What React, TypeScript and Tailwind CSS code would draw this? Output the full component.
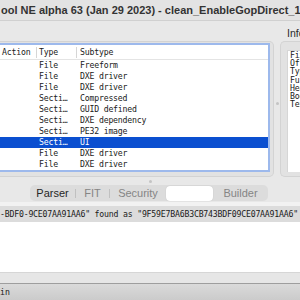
import React from "react";

const rows: [string, string][] = [
  ["File", "Freeform"],
  ["File", "DXE driver"],
  ["File", "DXE driver"],
  ["Secti…", "Compressed"],
  ["Secti…", "GUID defined"],
  ["Secti…", "DXE dependency"],
  ["Secti…", "PE32 image"],
  ["Secti…", "UI"],
  ["File", "DXE driver"],
  ["File", "DXE driver"],
];

const info = [
  "Fixed: No",
  "Offset: 8A4h",
  "Type: 15h",
  "Full size: 1Ah (26)",
  "Header size: 4h (4)",
  "Body size: 16h (22)",
  "Text: AmiBoardInfo",
];

export default function App() {
  return (
    <div className="w-[300px] h-[300px] overflow-hidden bg-[#e8e8e8] flex flex-col font-['Liberation_Sans',Arial,sans-serif] text-[#222]">
      {/* Title bar */}
      <div className="h-[21px] shrink-0 bg-[#e3e3e3] border-b border-[#d0d0d0] flex items-center pl-[1px] overflow-hidden">
        <span className="whitespace-nowrap text-[11px] font-bold text-[#333] leading-none">
          ool NE alpha 63 (Jan 29 2023) - clean_EnableGopDirect_1_
        </span>
      </div>

      {/* Upper panes */}
      <div className="h-[156px] shrink-0 flex">
        {/* Structure */}
        <div className="w-[274px] shrink-0 flex flex-col">
          <div className="h-[20px] shrink-0" />
          <div className="flex-1 bg-[#e2e2e2] border border-l-0 border-[#d3d3d3] rounded-r-[5px] pt-[1px] pr-[3px] pb-[4px]">
            <div className="h-full bg-white border-2 border-l-0 border-[#9db9ec] font-['DejaVu_Sans_Mono',monospace] text-[8.2px] tracking-[-0.2px] text-[#1a1a1a]">
              <div className="h-[15px] flex items-center border-b border-[#e4e4e4]">
                <div className="w-[36px] pl-[2px]">Action</div>
                <div className="w-px h-[11px] bg-[#d6d6d6]" />
                <div className="w-[39px] pl-[2px]">Type</div>
                <div className="w-px h-[11px] bg-[#d6d6d6]" />
                <div className="pl-[3px]">Subtype</div>
              </div>
              {rows.map(([t, s], i) => (
                <div
                  key={i}
                  className={
                    "h-[11px] flex items-center whitespace-nowrap " +
                    (i === 7 ? "bg-[#0b4fd0] text-white" : "")
                  }
                >
                  <div className="w-[37px]" />
                  <div className="w-[40px] pl-[2px]">{t}</div>
                  <div className="pl-[3px]">{s}</div>
                </div>
              ))}
            </div>
          </div>
        </div>

        {/* vertical splitter */}
        <div className="w-[6px] shrink-0 flex items-center justify-center pt-[9px]">
          <div className="w-[3px] h-[3px] rounded-full bg-[#c4c4c4]" />
        </div>

        {/* Info */}
        <div className="flex-1 flex flex-col min-w-0">
          <div className="h-[20px] shrink-0 pl-[7px] flex items-center pt-[6px] text-[10.5px] text-[#2a2a2a] whitespace-nowrap">
            Info
          </div>
          <div className="flex-1 bg-[#e2e2e2] border border-r-0 border-[#d3d3d3] rounded-l-[5px] pl-[6px] pt-[8px] pb-[4px]">
            <div className="h-full bg-white border-l border-t border-[#d6d6d6] pl-[2px] font-['DejaVu_Sans_Mono',monospace] text-[8.2px] leading-[8.2px] tracking-[-0.2px] text-[#1a1a1a] whitespace-nowrap overflow-hidden">
              {info.map((l, i) => (
                <div key={i}>{l}</div>
              ))}
            </div>
          </div>
        </div>
      </div>

      {/* horizontal splitter */}
      <div className="h-[8px] shrink-0 flex items-center justify-center">
        <div className="w-[3px] h-[3px] rounded-full bg-[#c4c4c4]" />
      </div>

      {/* Segmented tabs */}
      <div className="h-[17px] shrink-0 pl-[30px] flex">
        <div className="w-[238px] h-[16px] bg-[#dcdcdc] rounded-[5px] flex items-center text-[11px] text-[#858585] whitespace-nowrap">
          <div className="w-[45px] text-center text-[#262626]">Parser</div>
          <div className="w-px h-[9px] bg-[#c0c0c0]" />
          <div className="w-[33px] text-center">FIT</div>
          <div className="w-px h-[9px] bg-[#c0c0c0]" />
          <div className="w-[56px] text-center">Security</div>
          <div className="w-[47px] h-[15px] bg-white rounded-[4px] self-end shadow-[0_0_1px_rgba(0,0,0,0.2)]" />
          <div className="flex-1 text-center">Builder</div>
        </div>
      </div>

      {/* Messages */}
      <div className="h-[81px] shrink-0 bg-white flex flex-col">
        <div className="h-[4px] shrink-0 bg-[#f2f2f2]" />
        <div className="h-[16px] shrink-0 bg-[#dcdcdc] flex items-center font-['DejaVu_Sans_Mono',monospace] text-[8.2px] tracking-[-0.2px] text-[#1a1a1a] whitespace-nowrap overflow-hidden">
          -BDF0-9CE07AA91AA6" found as "9F59E7BA6B3CB743BDF09CE07AA91AA6"
        </div>
        <div className="flex-1" />
        <div className="h-[11px] shrink-0 bg-[#e6e6e6] border-t border-[#d6d6d6]" />
      </div>

      {/* Status bar */}
      <div className="flex-1 border-t border-[#9e9e9e] bg-gradient-to-b from-[#dadada] to-[#cbcbcb] flex items-center font-['DejaVu_Sans_Mono',monospace] text-[8.2px] text-[#1a1a1a]">
        in
      </div>
    </div>
  );
}
